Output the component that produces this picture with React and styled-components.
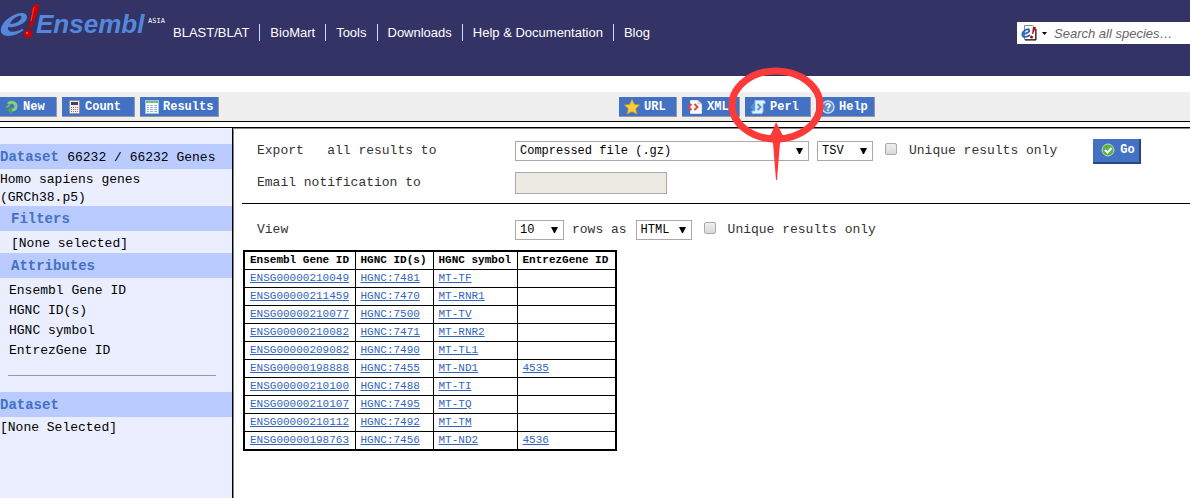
import React, { useState } from "react";
import styled, { createGlobalStyle, css } from "styled-components";

const GlobalStyle = createGlobalStyle`
    * {
        box-sizing: border-box;
    }
    body {
        margin: 0;
        background-color: #fff;
        color: #000;
        font-family: "Liberation Mono", "Courier New", monospace;
        font-size: 13px;
        line-height: 18px;
    }
    button, input, select {
        font-family: inherit;
        margin: 0;
    }
`
const Page = styled.div`
    display: flex;
    flex-direction: column;
    min-height: 100vh;
    overflow-x: hidden;
`
const Header = styled.header`
    display: flex;
    align-items: flex-start;
    height: 76px;
    background-color: #333366;
    font-family: "Liberation Sans", Arial, sans-serif;
`
const Logo = styled.a`
    display: flex;
    width: 168px;
    height: 42px;
    flex-shrink: 0;
`
const Nav = styled.nav`
    display: flex;
    padding-top: 24px;
`
const NavLink = styled.a`
    height: 17px;
    padding: 0 10px;
    border-left: 1px solid #ccddff;
    color: #fff;
    font-size: 13px;
    line-height: 17px;
    text-decoration: none;
    white-space: nowrap;

    &:first-child {
        border-left: none;
        padding-left: 5px;
    }
`
const Search = styled.div`
    display: flex;
    align-items: center;
    width: 173px;
    height: 22px;
    margin: 22px 0 0 auto;
    padding-left: 4px;
    background-color: #fff;
`
const SpeciesBtn = styled.button`
    display: flex;
    align-items: center;
    gap: 5px;
    padding: 0;
    border: none;
    background: none;
    cursor: pointer;
`
const SearchInput = styled.input`
    flex: 1;
    min-width: 0;
    padding: 0 0 0 7px;
    border: none;
    outline: none;
    background: none;
    font-size: 13px;

    &::placeholder {
        color: #666;
        font-style: italic;
    }
`
const Toolbar = styled.div`
    display: flex;
    align-items: flex-start;
    gap: 5px;
    height: 30px;
    margin-top: 16px;
    padding-top: 5px;
    background-color: #eee;
    border-bottom: 1px solid #000;
`
const ToolGroup = styled.div`
    display: flex;
    gap: 5px;
    ${(props) => props.$end && css`
        margin: 0 315px 0 auto;
    `}
`
const ToolBtn = styled.button`
    display: flex;
    align-items: center;
    gap: 4px;
    width: ${(props) => props.$width}px;
    height: 20px;
    padding: 0 0 0 5px;
    border: none;
    border-right: 1px solid #999;
    border-bottom: 1px solid #999;
    background-color: #4371c4;
    color: #fff;
    font-size: 12px;
    font-weight: bold;
    cursor: pointer;
`
const PerlSlot = styled.div`
    position: relative;
`
const Marker = styled.svg`
    position: absolute;
    left: -18px;
    top: -30px;
    z-index: 2;
    pointer-events: none;
`
const Body = styled.div`
    display: flex;
    flex: 1;
    margin-top: 5px;
    border-top: 1px solid #000;
`
const Sidebar = styled.aside`
    width: 233px;
    flex-shrink: 0;
    padding-top: 16px;
    background-color: #eaeeff;
    border-right: 1px solid #000;
`
const SideTitle = styled.h2`
    height: 25px;
    margin: 0;
    padding-left: ${(props) => (props.$indent ? "11px" : "0")};
    background-color: #bacbff;
    color: #4371c4;
    font-size: 14px;
    line-height: 26px;
    white-space: nowrap;
`
const Count = styled.span`
    color: #000;
    font-size: 13px;
    font-weight: normal;
`
const SideText = styled.div`
    padding: ${(props) => (props.$indent ? "4px 0 0 11px" : "2px 0 0")};
    height: ${(props) => props.$height}px;
`
const AttrList = styled.ul`
    margin: 0;
    padding: 3px 0 0 9px;
    list-style: none;
    line-height: 20px;
`
const Divider = styled.hr`
    height: 1px;
    margin: 14px 16px 16px 8px;
    border: none;
    background-color: #999;
`
const Main = styled.main`
    flex: 1;
    min-width: 0;
    padding-left: 8px;
    border-top: 1px solid #888;
    border-left: 1px solid #888;
`
const Form = styled.div`
    color: #333;
`
const Section = styled.div`
    display: flex;
    flex-direction: column;
    gap: 10px;
    padding: ${(props) => props.$pad};
    ${(props) => props.$line && css`
        border-bottom: 1px solid #000;
    `}
`
const Row = styled.div`
    display: flex;
    align-items: center;
    height: 22px;
    white-space: nowrap;
`
const RowLabel = styled.label`
    width: 258px;
    flex-shrink: 0;
    white-space: pre;
`
const RowsAs = styled.label`
    margin-right: 9px;
`
const SelectBox = styled.div`
    display: grid;
    align-items: center;
    width: ${(props) => props.$width}px;
    margin-right: 8px;

    & > * {
        grid-area: 1 / 1;
    }
    & > svg {
        justify-self: end;
        margin-right: 6px;
        pointer-events: none;
    }
`
const Select = styled.select`
    appearance: none;
    width: 100%;
    height: 20px;
    padding: 0 4px;
    border: 1px solid #a9a9a9;
    border-radius: 0;
    background-color: #fff;
    color: #000;
    font-size: 12px;
`
const EmailInput = styled.input`
    width: 152px;
    height: 22px;
    border: 1px solid #a9a9a9;
    background-color: #ebebe4;
`
const Check = styled.input`
    appearance: none;
    width: 12px;
    height: 12px;
    margin: 0 12px 4px 4px;
    border: 1px solid #aaa;
    border-radius: 2px;
    background: linear-gradient(#eee, #d8d8d8);

    &:checked {
        background: #4371c4;
    }
`
const GoBtn = styled.button`
    display: flex;
    align-items: center;
    gap: 5px;
    width: 48px;
    height: 25px;
    margin-left: 36px;
    padding: 0 0 0 8px;
    border: none;
    border-right: 2px solid #274684;
    border-bottom: 2px solid #274684;
    background-color: #4371c4;
    color: #fff;
    font-size: 12px;
    font-weight: bold;
    cursor: pointer;
`
const Table = styled.table`
    margin: 7px 0 0 1px;
    border: 2px solid #000;
    border-collapse: collapse;
    font-size: 11px;
    line-height: 15px;
`
const Th = styled.th`
    width: ${(props) => props.$width}px;
    padding: 1px 0 1px 5px;
    border: 1px solid #000;
    text-align: left;
    white-space: nowrap;
`
const Td = styled.td`
    height: 18px;
    padding: 1px 5px;
    border: 1px solid #000;
`
const CellLink = styled.a`
    color: #3366bb;
`

const NAV = ["BLAST/BLAT", "BioMart", "Tools", "Downloads", "Help & Documentation", "Blog"];

const ATTRIBUTES = ["Ensembl Gene ID", "HGNC ID(s)", "HGNC symbol", "EntrezGene ID"];

const COLUMNS = [
    { name: "Ensembl Gene ID", width: 111 },
    { name: "HGNC ID(s)", width: 78 },
    { name: "HGNC symbol", width: 84 },
    { name: "EntrezGene ID", width: 99 },
];

const ROWS = [
    ["ENSG00000210049", "HGNC:7481", "MT-TF", ""],
    ["ENSG00000211459", "HGNC:7470", "MT-RNR1", ""],
    ["ENSG00000210077", "HGNC:7500", "MT-TV", ""],
    ["ENSG00000210082", "HGNC:7471", "MT-RNR2", ""],
    ["ENSG00000209082", "HGNC:7490", "MT-TL1", ""],
    ["ENSG00000198888", "HGNC:7455", "MT-ND1", "4535"],
    ["ENSG00000210100", "HGNC:7488", "MT-TI", ""],
    ["ENSG00000210107", "HGNC:7495", "MT-TQ", ""],
    ["ENSG00000210112", "HGNC:7492", "MT-TM", ""],
    ["ENSG00000198763", "HGNC:7456", "MT-ND2", "4536"],
];

const EnsemblLogo = () => (
    <svg width="168" height="42" viewBox="0 0 168 42">
        <path fillRule="evenodd" d="M8 27 C17 28 27 23 27 17 C27 12 19 12 12 16 C4 20 0 27 1 32 C3 38 15 37 24 30 L22 29 C15 33 7 33 8 27 Z M10 24 C12 19 18 15 21 16 C23 19 17 24 10 24 Z" fill="#5588dd" />
        <path d="M33 6 C35 3 39 3 39 6 C39 10 34 22 31 29 L29 29 C30 21 31 11 33 6 Z" fill="#cc0000" />
        <path d="M34 7 C33 11 32 16 31 21" fill="none" stroke="#ee4444" strokeWidth="1" />
        <ellipse cx="28" cy="34" rx="4" ry="4" fill="#cc0000" />
        <circle cx="27" cy="33" r="1" fill="#ee6666" />
        <text x="36" y="33" fill="#5588dd" fontSize="26" fontWeight="bold" fontStyle="italic" fontFamily="Liberation Sans, Arial, sans-serif">Ensembl</text>
        <text x="148" y="23" fill="#fff" fontSize="7" fontFamily="DejaVu Sans Mono, monospace">ASIA</text>
    </svg>
);

const SpeciesIcon = () => (
    <svg width="16" height="16" viewBox="0 0 16 16">
        <path d="M3.5 .5 H11.5 L14.5 3.5 V14.5 H3.5 Z" fill="#fff" stroke="#888" />
        <path d="M15 4 V15 H4" fill="none" stroke="#000" />
        <path d="M2 9 C5 9 9 7 8 5 C7 3 1 6 1.500 10 C2 13 6 12 9 10" fill="none" stroke="#3366bb" strokeWidth="2" />
        <path d="M12 2 H15 L12 9 H11 Z" fill="#c00" />
        <circle cx="10.500" cy="12" r="1.500" fill="#c00" />
    </svg>
);

const Arrow = () => (
    <svg width="7" height="8" viewBox="0 0 7 8">
        <path d="M0 1 H7 L4 7 H3 Z" fill="#000" />
    </svg>
);

const NewIcon = () => (
    <svg width="14" height="14" viewBox="0 0 14 14">
        <path d="M3 4 C6 1 11 2 11 6.500 C11 9 9 10 6 10" fill="none" stroke="#8ccb84" strokeWidth="3" />
        <path d="M7 7 V14 L2 10 Z" fill="#4fa64a" />
        <path d="M1 7 C3 7 4 6 5 4" fill="none" stroke="#5fb55a" strokeWidth="2" />
    </svg>
);

const CountIcon = () => (
    <svg width="14" height="14" viewBox="0 0 14 14">
        <rect x="2.500" y=".5" width="10" height="13" rx="1" fill="#eee" stroke="#999" />
        <rect x="4" y="2" width="7" height="3" fill="#445" />
        <path d="M4 7.500 h1 m1 0 h1 M4 9.500 h1 m1 0 h1 M4 11.500 h1 m1 0 h1 m1 0 h1" stroke="#777" />
        <path d="M8 7.500 h1 m1 0 h1 M8 9.500 h1 m1 0 h1 M10 11.500 h1" stroke="#d66" />
    </svg>
);

const ResultsIcon = () => (
    <svg width="14" height="14" viewBox="0 0 14 14">
        <rect x=".5" y=".5" width="13" height="13" fill="#fff" stroke="#9cc4e8" />
        <rect x="1" y="1" width="12" height="2" fill="#7fb87a" />
        <path d="M2 5.500 h2 m1 0 h3 m1 0 h3 M2 7.500 h2 m1 0 h3 m1 0 h3 M2 9.500 h2 m1 0 h3 m1 0 h3 M2 11.500 h2 m1 0 h3 m1 0 h3" stroke="#8fb6e0" />
    </svg>
);

const StarIcon = () => (
    <svg width="16" height="16" viewBox="0 0 16 16">
        <path d="M8 .5 L10.300 5.500 L15.500 6 L11.600 9.800 L12.800 15 L8 12.400 L3.200 15 L4.400 9.800 L.5 6 L5.700 5.500 Z" fill="#f8cf3a" stroke="#d79b1e" strokeWidth=".8" />
    </svg>
);

const XmlIcon = () => (
    <svg width="16" height="16" viewBox="0 0 16 16">
        <path d="M3.500 1.500 H11 L14.500 5 V14.500 H3.500 Z" fill="#fff" stroke="#dde" />
        <path d="M11 1.500 V5 H14.500" fill="#ddd" stroke="#bbb" strokeWidth=".6" />
        <path d="M4.500 5 L1.500 8 L4.500 11 M7.500 5 L10.500 8 L7.500 11" fill="none" stroke="#e8443a" strokeWidth="2" />
    </svg>
);

const PerlIcon = () => (
    <svg width="16" height="16" viewBox="0 0 16 16">
        <path d="M5 1.500 H14 Q15.500 2 15 4.500 H13 V12 Q13 14.500 11 14.500 H3 Q1.500 14 2 12 H5 V3 Z" fill="#e3f0fc" stroke="#9cc8f0" />
        <path d="M4.500 5 L1.500 8 L4.500 11 M7.500 5 L10.500 8 L7.500 11" fill="none" stroke="#4a97df" strokeWidth="2" />
    </svg>
);

const HelpIcon = () => (
    <svg width="14" height="14" viewBox="0 0 14 14">
        <circle cx="7" cy="7" r="6" fill="#5f8fcb" stroke="#c9daf0" strokeWidth="1.500" />
        <path d="M5 5.500 C5 3 9 3 9 5.500 C9 7 7 6.500 7 8.500 M7 9.500 V11" fill="none" stroke="#fff" strokeWidth="1.500" />
    </svg>
);

const OkIcon = () => (
    <svg width="14" height="14" viewBox="0 0 14 14">
        <circle cx="7" cy="7" r="6" fill="#5cb14f" stroke="#b9e2b0" />
        <path d="M4 7 L6.500 9.500 L10.500 5" fill="none" stroke="#fff" strokeWidth="2" />
    </svg>
);

const Dropdown = ({ id, label, width, options }) => (
    <SelectBox $width={width}>
        <Select id={id} aria-label={label}>
            {options.map((o) => <option key={o}>{o}</option>)}
        </Select>
        <Arrow />
    </SelectBox>
);

const App = () => {
    const [exportUnique, setExportUnique] = useState(false);
    const [viewUnique, setViewUnique] = useState(false);

    return (
        <Page>
            <GlobalStyle />
            <Header>
                <Logo href="#" aria-label="Ensembl Asia"><EnsemblLogo /></Logo>
                <Nav>
                    {NAV.map((name) => <NavLink href="#" key={name}>{name}</NavLink>)}
                </Nav>
                <Search>
                    <SpeciesBtn aria-label="Choose species">
                        <SpeciesIcon />
                        <svg width="5" height="3"><path d="M0 0 H5 L2.500 3 Z" /></svg>
                    </SpeciesBtn>
                    <SearchInput type="text" aria-label="Search" placeholder="Search all species…" />
                </Search>
            </Header>

            <Toolbar>
                <ToolGroup>
                    <ToolBtn $width={57}><NewIcon />New</ToolBtn>
                    <ToolBtn $width={73}><CountIcon />Count</ToolBtn>
                    <ToolBtn $width={79}><ResultsIcon />Results</ToolBtn>
                </ToolGroup>
                <ToolGroup $end>
                    <ToolBtn $width={58}><StarIcon />URL</ToolBtn>
                    <ToolBtn $width={58}><XmlIcon />XML</ToolBtn>
                    <PerlSlot>
                        <ToolBtn $width={66}><PerlIcon />Perl</ToolBtn>
                        <Marker width="100" height="116" viewBox="0 0 100 116">
                            <ellipse cx="49" cy="38" rx="44" ry="34" fill="none" stroke="#fc3a3a" strokeWidth="7" />
                            <path d="M49 55 C52 60 54 66 58 72 L53 76 L50 113 H49 L46 76 L41 72 C45 66 47 60 49 55 Z" fill="#fc3a3a" />
                        </Marker>
                    </PerlSlot>
                    <ToolBtn $width={59}><HelpIcon />Help</ToolBtn>
                </ToolGroup>
            </Toolbar>

            <Body>
                <Sidebar>
                    <SideTitle>Dataset <Count>66232 / 66232 Genes</Count></SideTitle>
                    <SideText $height={37}>Homo sapiens genes<br />(GRCh38.p5)</SideText>
                    <SideTitle $indent>Filters</SideTitle>
                    <SideText $indent $height={22}>[None selected]</SideText>
                    <SideTitle $indent>Attributes</SideTitle>
                    <AttrList>
                        {ATTRIBUTES.map((name) => <li key={name}>{name}</li>)}
                    </AttrList>
                    <Divider />
                    <SideTitle>Dataset</SideTitle>
                    <SideText $height={22}>[None Selected]</SideText>
                </Sidebar>

                <Main>
                    <Form>
                        <Section $line $pad="11px 0 9px 15px">
                            <Row>
                                <RowLabel htmlFor="export-to">Export   all results to</RowLabel>
                                <Dropdown id="export-to" width={294} options={["Compressed file (.gz)", "File"]} />
                                <Dropdown label="Export format" width={56} options={["TSV", "CSV", "XLS"]} />
                                <Check id="export-unique" type="checkbox" checked={exportUnique} onChange={(e) => setExportUnique(e.target.checked)} />
                                <label htmlFor="export-unique">Unique results only</label>
                                <GoBtn><OkIcon />Go</GoBtn>
                            </Row>
                            <Row>
                                <RowLabel htmlFor="email">Email notification to</RowLabel>
                                <EmailInput id="email" type="text" disabled />
                            </Row>
                        </Section>
                        <Section $pad="15px 0 2px 15px">
                            <Row>
                                <RowLabel htmlFor="row-count">View</RowLabel>
                                <Dropdown id="row-count" width={49} options={["10", "50", "100"]} />
                                <RowsAs htmlFor="row-format">rows as</RowsAs>
                                <Dropdown id="row-format" width={56} options={["HTML", "TSV"]} />
                                <Check id="view-unique" type="checkbox" checked={viewUnique} onChange={(e) => setViewUnique(e.target.checked)} />
                                <label htmlFor="view-unique">Unique results only</label>
                            </Row>
                        </Section>
                    </Form>
                    <Table>
                        <thead>
                            <tr>
                                {COLUMNS.map((c) => <Th key={c.name} $width={c.width}>{c.name}</Th>)}
                            </tr>
                        </thead>
                        <tbody>
                            {ROWS.map((row) => (
                                <tr key={row[0]}>
                                    {row.map((cell, i) => (
                                        <Td key={i}>{cell && <CellLink href="#">{cell}</CellLink>}</Td>
                                    ))}
                                </tr>
                            ))}
                        </tbody>
                    </Table>
                </Main>
            </Body>
        </Page>
    );
};

export default App;
